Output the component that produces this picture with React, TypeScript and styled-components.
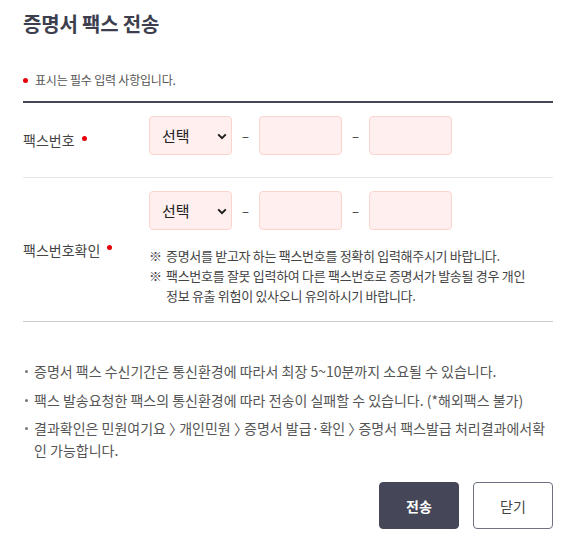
import React from "react";
import styled, { createGlobalStyle } from "styled-components";

const GlobalStyle = createGlobalStyle`
  html, body {
    margin: 0;
    padding: 0;
    background: #ffffff;
  }
  body {
    font-family: "Noto Sans CJK KR", "Noto Sans", sans-serif;
    color: #444;
  }
  * { box-sizing: border-box; }
`;

const Page = styled.div`
  width: 530px;
  margin-left: 23px;
`;

const Title = styled.h2`
  margin: 0;
  padding-top: 10px;
  font-size: 20px;
  line-height: 28px;
  font-weight: 700;
  color: #3d3f4f;
  letter-spacing: -0.2px;
`;

const RequiredNote = styled.p`
  margin: 33px 0 0;
  padding: 0 0 12px 12px;
  position: relative;
  font-size: 12px;
  line-height: 18px;
  color: #555;
  letter-spacing: -0.2px;
  &::before {
    content: "";
    position: absolute;
    left: 0;
    top: 7px;
    width: 5px;
    height: 5px;
    border-radius: 50%;
    background: #e8000b;
  }
`;

const FormTable = styled.div`
  border-top: 2px solid #454759;
`;

const Row = styled.div<{ $last?: boolean }>`
  display: grid;
  grid-template-columns: 126px 1fr;
  border-bottom: 1px solid ${(p) => (p.$last ? "#cccccc" : "#e6e6e6")};
`;

const Label = styled.div`
  align-self: center;
  display: flex;
  align-items: center;
  font-size: 14px;
  line-height: 20px;
  color: #444;
`;

const RequiredDot = styled.span`
  display: inline-block;
  width: 5px;
  height: 5px;
  margin-left: 7px;
  margin-top: -4px;
  border-radius: 50%;
  background: #e8000b;
`;

const FieldCell = styled.div<{ $bottom: number }>`
  padding: 13px 0 ${(p) => p.$bottom}px;
`;

const FieldLine = styled.div`
  display: flex;
  align-items: center;
`;

const SelectWrap = styled.div`
  position: relative;
  width: 83px;
  height: 39px;
`;

const Select = styled.select`
  appearance: none;
  -webkit-appearance: none;
  width: 100%;
  height: 100%;
  padding: 0 0 0 12px;
  border: 1px solid #fbd4ce;
  border-radius: 4px;
  background: #fff0ef;
  font-family: "Noto Sans CJK KR", sans-serif;
  font-size: 15px;
  color: #222;
  outline: none;
`;

const Chevron = styled.svg`
  position: absolute;
  right: 5px;
  top: 50%;
  width: 10px;
  height: 7px;
  margin-top: -3px;
  pointer-events: none;
`;

const Dash = styled.span`
  width: 27px;
  text-align: center;
  font-size: 13px;
  color: #333;
`;

const TextInput = styled.input`
  width: 83px;
  height: 39px;
  padding: 0 10px;
  border: 1px solid #fbd4ce;
  border-radius: 4px;
  background: #fff0ef;
  font-family: "Noto Sans CJK KR", sans-serif;
  font-size: 14px;
  outline: none;
`;

const Notes = styled.ul`
  list-style: none;
  margin: 16px 0 0;
  padding: 0;
  font-size: 13px;
  line-height: 20px;
  color: #444;
  letter-spacing: -0.3px;
`;

const NoteItem = styled.li`
  display: flex;
`;

const NoteMark = styled.span`
  flex: 0 0 17px;
`;

const InfoList = styled.ul`
  list-style: none;
  margin: 38px 0 0;
  padding: 0 6px 0 0;
  display: flex;
  flex-direction: column;
  gap: 6.5px;
`;

const InfoItem = styled.li`
  position: relative;
  padding-left: 11px;
  font-size: 14px;
  line-height: 22px;
  color: #555;
  word-break: break-all;
  &::before {
    content: "";
    position: absolute;
    left: 2px;
    top: 10px;
    width: 3px;
    height: 3px;
    border-radius: 50%;
    background: #777;
  }
`;

const PathSep = styled.span`
  font-feature-settings: "halt";
`;

const Buttons = styled.div`
  display: flex;
  justify-content: flex-end;
  gap: 14px;
  margin-top: 21px;
`;

const Button = styled.button<{ $primary?: boolean }>`
  width: 80px;
  height: 47px;
  border-radius: 4px;
  border: 1px solid ${(p) => (p.$primary ? "#454759" : "#6e7282")};
  background: ${(p) => (p.$primary ? "#454759" : "#ffffff")};
  color: ${(p) => (p.$primary ? "#ffffff" : "#444")};
  font-family: "Noto Sans CJK KR", sans-serif;
  font-size: 14px;
  font-weight: ${(p) => (p.$primary ? 700 : 400)};
  cursor: pointer;
`;

const PhoneFields: React.FC = () => (
  <FieldLine>
    <SelectWrap>
      <Select defaultValue="">
        <option value="">선택</option>
        <option value="02">02</option>
        <option value="031">031</option>
      </Select>
      <Chevron viewBox="0 0 10 7">
        <path d="M1.2 1.4 L5 5.2 L8.8 1.4" fill="none" stroke="#1e1e1e" strokeWidth="2" />
      </Chevron>
    </SelectWrap>
    <Dash>–</Dash>
    <TextInput type="text" />
    <Dash>–</Dash>
    <TextInput type="text" />
  </FieldLine>
);

export default function App() {
  return (
    <Page>
      <GlobalStyle />
      <Title>증명서 팩스 전송</Title>
      <RequiredNote>표시는 필수 입력 사항입니다.</RequiredNote>
      <FormTable>
        <Row>
          <Label>
            팩스번호
            <RequiredDot />
          </Label>
          <FieldCell $bottom={22}>
            <PhoneFields />
          </FieldCell>
        </Row>
        <Row $last>
          <Label>
            팩스번호확인
            <RequiredDot />
          </Label>
          <FieldCell $bottom={15}>
            <PhoneFields />
            <Notes>
              <NoteItem>
                <NoteMark>※</NoteMark>
                <span>증명서를 받고자 하는 팩스번호를 정확히 입력해주시기 바랍니다.</span>
              </NoteItem>
              <NoteItem>
                <NoteMark>※</NoteMark>
                <span>
                  팩스번호를 잘못 입력하여 다른 팩스번호로 증명서가 발송될 경우 개인
                  <br />
                  정보 유출 위험이 있사오니 유의하시기 바랍니다.
                </span>
              </NoteItem>
            </Notes>
          </FieldCell>
        </Row>
      </FormTable>
      <InfoList>
        <InfoItem>증명서 팩스 수신기간은 통신환경에 따라서 최장 5~10분까지 소요될 수 있습니다.</InfoItem>
        <InfoItem>팩스 발송요청한 팩스의 통신환경에 따라 전송이 실패할 수 있습니다. (*해외팩스 불가)</InfoItem>
        <InfoItem>
          결과확인은 민원여기요 <PathSep>〉</PathSep> 개인민원 <PathSep>〉</PathSep> 증명서 발급·확인{" "}
          <PathSep>〉</PathSep> 증명서 팩스발급 처리결과에서확인 가능합니다.
        </InfoItem>
      </InfoList>
      <Buttons>
        <Button type="button" $primary>
          전송
        </Button>
        <Button type="button">닫기</Button>
      </Buttons>
    </Page>
  );
}
